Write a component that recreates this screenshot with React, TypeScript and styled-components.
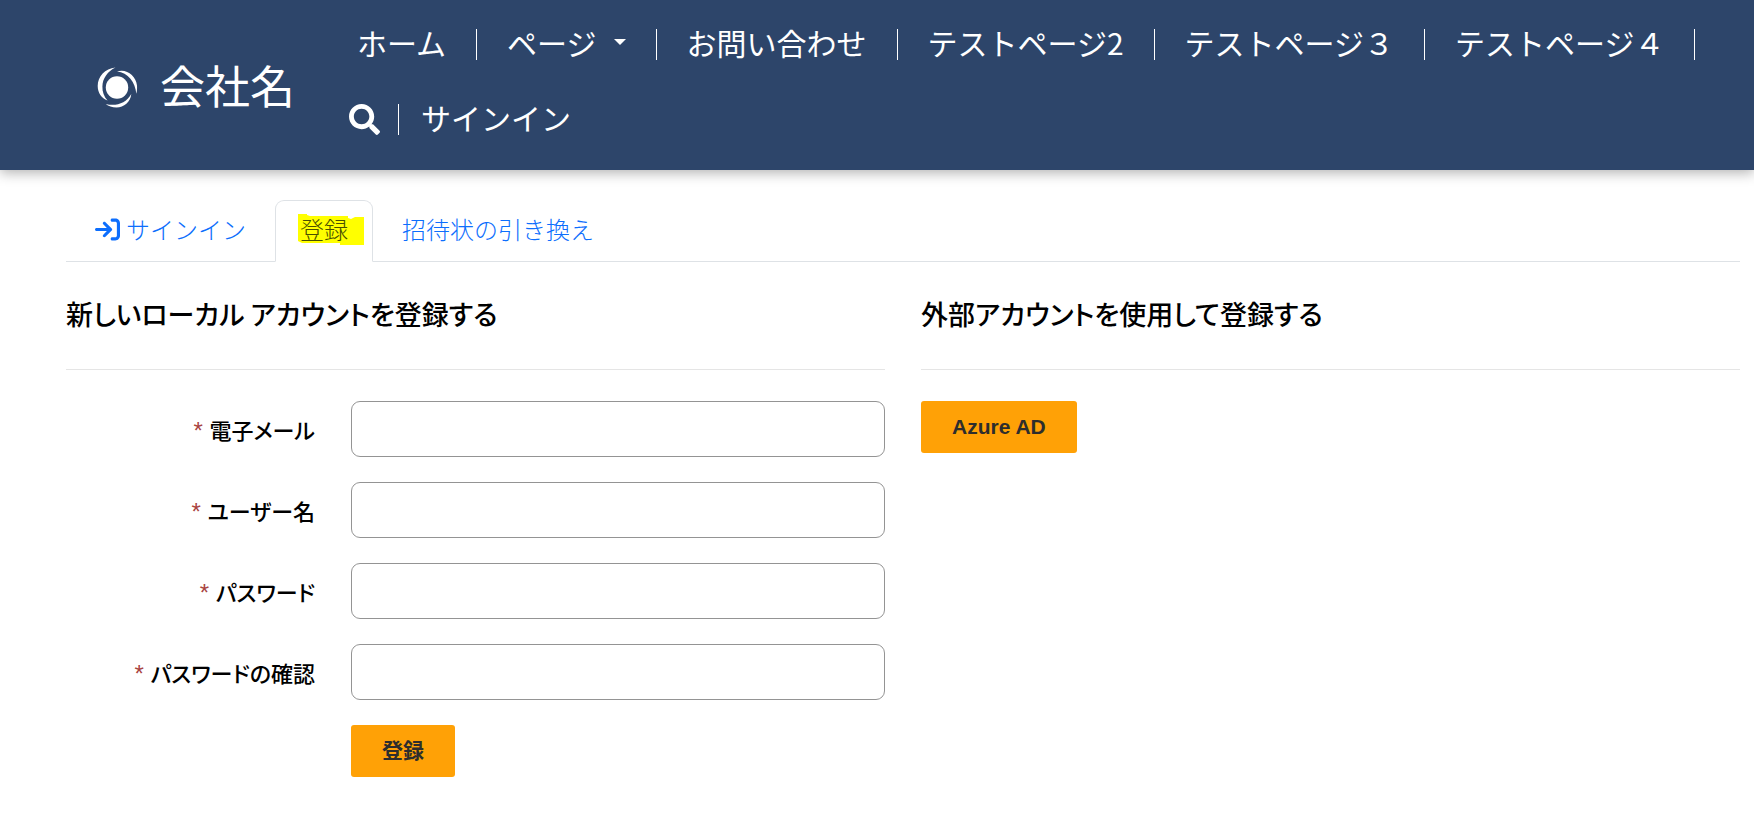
import React from "react";
import styled, { createGlobalStyle } from "styled-components";
import { FaSearch } from "react-icons/fa";
import { FaArrowRightToBracket } from "react-icons/fa6";

const GlobalStyle = createGlobalStyle`
  *, *::before, *::after { box-sizing: border-box; }
  body {
    margin: 0;
    background: #fff;
    color: #000;
    font-family: "Noto Sans CJK JP", "Liberation Sans", sans-serif;
    font-size: 24px;
    line-height: 36px;
  }
`;

const Header = styled.header`
  display: flex;
  align-items: center;
  padding-left: 97px;
  background: #2d456a;
  color: #fff;
  box-shadow: 0 3px 12px rgba(0, 0, 0, 0.3);
`;

const Brand = styled.a`
  display: flex;
  flex: none;
  align-items: center;
  gap: 22px;
  width: 230px;
  padding-top: 4px;
  color: inherit;
  font-size: 45px;
  line-height: 60px;
  text-decoration: none;
`;

const BrandName = styled.span`
  padding-bottom: 4px;
`;

const NavList = styled.ul`
  display: flex;
  flex: 1;
  flex-wrap: wrap;
  row-gap: 30px;
  margin: 0;
  padding: 22px 0 28px;
  list-style: none;
`;

const NavItem = styled.li<{ $tight?: boolean; $last?: boolean }>`
  display: flex;
  align-items: center;
  height: 45px;
  padding: 0 ${(p) => (p.$tight ? 18 : 30)}px 0 ${(p) => (p.$tight || p.$last ? 22 : 30)}px;

  &::after {
    content: "";
    width: 1px;
    height: 31px;
    margin-right: -${(p) => (p.$tight ? 18 : 30)}px;
    margin-left: ${(p) => (p.$tight ? 18 : 30)}px;
    background: ${(p) => (p.$last ? "transparent" : "#fff")};
  }
`;

const NavLink = styled.a`
  padding-bottom: 6px;
  color: inherit;
  font-size: 30px;
  line-height: 44px;
  text-decoration: none;
  white-space: nowrap;
`;

const NavButton = styled.button`
  display: flex;
  align-items: center;
  gap: 17px;
  padding: 0 0 6px;
  border: 0;
  background: none;
  color: inherit;
  font: 400 30px/44px "Noto Sans CJK JP", sans-serif;
`;

const IconButton = styled(NavButton)`
  padding: 0;
`;

const Caret = styled.span`
  border: 6px solid transparent;
  border-top-color: #fff;
  border-bottom: 0;
`;

const Main = styled.main`
  padding: 30px 14px 52px 66px;
`;

const Tabs = styled.nav`
  display: flex;
  border-bottom: 1px solid #dee2e6;
`;

const Tab = styled.a<{ $active?: boolean }>`
  display: flex;
  align-items: center;
  gap: 6px;
  height: 62px;
  margin-bottom: -1px;
  padding: 0 ${(p) => (p.$active ? 24 : 28)}px 4px;
  border: 1px solid ${(p) => (p.$active ? "#dee2e6" : "transparent")};
  border-bottom-color: ${(p) => (p.$active ? "#fff" : "transparent")};
  border-radius: 9px 9px 0 0;
  color: ${(p) => (p.$active ? "#495057" : "#0d6efd")};
  font-weight: 300;
  text-decoration: none;
`;

const Marked = styled.span`
  position: relative;
  color: #494f00;
`;

const MarkerStroke = styled.svg`
  position: absolute;
  top: 3px;
  left: -2px;
  z-index: -1;
`;

const Columns = styled.div`
  display: grid;
  grid-template-columns: 1fr 1fr;
  gap: 36px;
  padding-top: 32px;
`;

const Title = styled.h2`
  margin: 0 0 31px;
  padding-bottom: 35px;
  border-bottom: 1px solid #e5e5e5;
  font-size: 27px;
  font-weight: 500;
  line-height: 40px;
  font-feature-settings: "palt";
`;

const Form = styled.form`
  display: grid;
  gap: 25px;
`;

const Row = styled.div`
  display: grid;
  grid-template-columns: calc((100% + 36px) / 3) 1fr;
  align-items: center;
`;

const Label = styled.label`
  padding: 2px 36px 0 0;
  font-size: 22px;
  font-weight: 500;
  text-align: right;
  font-feature-settings: "palt";

  &::before {
    content: "* ";
    color: #a94442;
    font-family: "Liberation Sans", sans-serif;
    font-size: 24px;
    font-weight: 400;
  }
`;

const Input = styled.input`
  width: 100%;
  height: 56px;
  padding: 9px 18px;
  border: 1px solid #949494;
  border-radius: 9px;
  background: #fff;
  font: inherit;
`;

const Button = styled.button`
  justify-self: start;
  height: 52px;
  padding: 0 31px;
  border: 0;
  border-radius: 3px;
  background: #ffa106;
  color: #2d2d2d;
  font: 700 21px/30px "Liberation Sans", "Noto Sans CJK JP", sans-serif;
`;

const SubmitRow = styled(Row)`
  & > button { grid-column: 2; }
`;

const navPages = ["お問い合わせ", "テストページ2", "テストページ３", "テストページ４"];

const fields = [
  { id: "email", label: "電子メール", type: "email" },
  { id: "username", label: "ユーザー名", type: "text" },
  { id: "password", label: "パスワード", type: "password" },
  { id: "confirm", label: "パスワードの確認", type: "password" },
];

const Logo = () => (
  <svg width="41" height="41" viewBox="0 0 41 41" fill="#fff" aria-hidden="true">
    <circle cx="20" cy="20.500" r="11.200" />
    <path d="M18.500 0.600C8 1.500 0.700 9.500 0.700 19C0.700 26 4.500 31 10.500 33.500C7 29.500 5.200 25 5.400 19.500C5.600 11.500 10.500 4.500 18.500 0.600Z" />
    <path d="M20 4.500C29 1 39 8.500 40 18.500C40.200 21.500 40 24.500 39.300 26.800C38.500 15.500 31 5.500 20 4.500Z" />
    <path d="M34.300 27C33.500 35 27 40.500 19.500 40.500C15 40.500 11.500 39 8.700 37C19 39.500 29 36.500 34.300 27Z" />
  </svg>
);

export default function App() {
  return (
    <>
      <GlobalStyle />
      <Header>
        <Brand href="#">
          <Logo />
          <BrandName>会社名</BrandName>
        </Brand>
        <NavList>
          <NavItem>
            <NavLink href="#">ホーム</NavLink>
          </NavItem>
          <NavItem>
            <NavButton type="button">
              ページ
              <Caret />
            </NavButton>
          </NavItem>
          {navPages.map((page) => (
            <NavItem key={page}>
              <NavLink href="#">{page}</NavLink>
            </NavItem>
          ))}
          <NavItem $tight>
            <IconButton type="button" aria-label="検索">
              <FaSearch size={31} />
            </IconButton>
          </NavItem>
          <NavItem $last>
            <NavLink href="#">サインイン</NavLink>
          </NavItem>
        </NavList>
      </Header>
      <Main>
        <Tabs>
          <Tab href="#">
            <FaArrowRightToBracket size={25} />
            サインイン
          </Tab>
          <Tab href="#" $active aria-current="page">
            <Marked>
              <MarkerStroke width="66" height="31" viewBox="0 0 66 31" fill="#ff0" aria-hidden="true">
                <path d="M0 0H9V1L12 2H50V4L53 5L57 3H66V31H42V29H4L0 27Z" />
              </MarkerStroke>
              登録
            </Marked>
          </Tab>
          <Tab href="#">招待状の引き換え</Tab>
        </Tabs>
        <Columns>
          <section>
            <Title>新しいローカル アカウントを登録する</Title>
            <Form>
              {fields.map((f) => (
                <Row key={f.id}>
                  <Label htmlFor={f.id}>{f.label}</Label>
                  <Input id={f.id} type={f.type} />
                </Row>
              ))}
              <SubmitRow>
                <Button type="button">登録</Button>
              </SubmitRow>
            </Form>
          </section>
          <section>
            <Title>外部アカウントを使用して登録する</Title>
            <Button type="button">Azure AD</Button>
          </section>
        </Columns>
      </Main>
    </>
  );
}
